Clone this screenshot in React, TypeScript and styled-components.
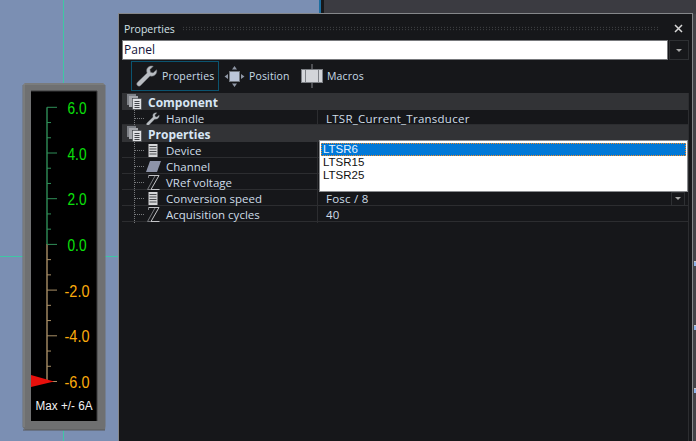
import React from "react";
import styled, { createGlobalStyle } from "styled-components";

const Global = createGlobalStyle`
  html, body { margin: 0; padding: 0; background: #7b8fb3; overflow: hidden; }
`;

const Desktop = styled.div`
  position: relative;
  width: 696px;
  height: 441px;
  overflow: hidden;
  background: #7b8fb3;
  font-family: "Open Sans", "Noto Sans", sans-serif;
`;

const BackPanel = styled.div`
  position: absolute;
  left: 319px;
  top: 0;
  right: 0;
  height: 14px;
  box-sizing: border-box;
  background: #3b3b41;
  border-left: 2px solid #1c6ea0;
  box-shadow: inset 3px 0 0 #17181a;
`;

const GuideH = styled.div`
  position: absolute;
  left: 0;
  top: 256px;
  width: 119px;
  height: 1px;
  background: #3fc7a4;
`;

const GuideV = styled.div`
  position: absolute;
  left: 63px;
  top: 0;
  width: 1px;
  height: 441px;
  background: #3fc7a4;
`;

const MeterSvg = styled.svg`
  position: absolute;
  left: 20px;
  top: 80px;
`;

const SideStrip = styled.div`
  position: absolute;
  left: 692px;
  top: 14px;
  bottom: 0;
  width: 4px;
  background: #434348;
`;

const Notch = styled.div<{ $top: number }>`
  position: absolute;
  left: 694px;
  top: ${(p) => p.$top}px;
  width: 2px;
  height: 4px;
  background: #8fb4e8;
  border-top: 1px solid #c9c9c9;
`;

const Window = styled.div`
  position: absolute;
  left: 118px;
  top: 13px;
  width: 575px;
  height: 428px;
  box-sizing: border-box;
  border: 1px solid #85878a;
  border-bottom: 0;
  background: #16171a;
  display: flex;
  flex-direction: column;
  padding: 0 3px;
`;

const TitleBar = styled.div`
  height: 26px;
  display: flex;
  align-items: center;
  gap: 7px;
  padding: 3px 0 0 2px;
  box-sizing: border-box;
  color: #d3e0e6;
  font-size: 10.5px;
`;

const Dots = styled.div`
  flex: 1;
  height: 5px;
  background-image: radial-gradient(#4a4c4f 0.8px, transparent 0.9px);
  background-size: 3px 2.5px;
`;

const CloseBtn = styled.svg`
  width: 9px;
  height: 9px;
  margin: 0 6px 0 8px;
  flex: none;
`;

const PanelRow = styled.div`
  display: flex;
  height: 20px;
  gap: 1px;
`;

const PanelInput = styled.div`
  flex: 1;
  box-sizing: border-box;
  background: #fff;
  border: 1px solid #77797c;
  color: #12123a;
  font-size: 12px;
  line-height: 17px;
  padding-left: 1px;
`;

const DropBtn = styled.div<{ $w: number; $h: number }>`
  width: ${(p) => p.$w}px;
  height: ${(p) => p.$h}px;
  box-sizing: border-box;
  border: 1px solid #2e3033;
  background: #17181b;
  display: flex;
  align-items: center;
  justify-content: center;
  flex: none;
  &::after {
    content: "";
    border-left: 3px solid transparent;
    border-right: 3px solid transparent;
    border-top: 3px solid #a8a8a8;
  }
`;

const Toolbar = styled.div`
  display: flex;
  align-items: stretch;
  height: 30px;
  margin: 1px 0 2px 9px;
`;

const ToolButton = styled.div<{ $active?: boolean; $w: number }>`
  width: ${(p) => p.$w}px;
  box-sizing: border-box;
  display: flex;
  align-items: center;
  gap: 4px;
  padding-left: 4px;
  border: 1px solid ${(p) => (p.$active ? "#0b5470" : "transparent")};
  color: #c8dbe6;
  font-size: 10.5px;
  letter-spacing: 0.15px;
`;

const Grid = styled.div`
  flex: 1;
  width: 567px;
  box-sizing: border-box;
  border-right: 1px solid #2c2d30;
  display: flex;
  flex-direction: column;
`;

const SectionRow = styled.div`
  height: 17px;
  flex: none;
  background: #323336;
  display: flex;
  align-items: center;
  padding-left: 5px;
  gap: 6px;
  color: #d8e6f4;
  font-size: 12px;
  font-weight: 700;
`;

const SectionLabel = styled.span`
  margin-top: 2px;
`;

const PropRow = styled.div<{ $h?: number }>`
  height: ${(p) => p.$h ?? 16}px;
  flex: none;
  box-sizing: border-box;
  border-bottom: 1px solid #2c2d30;
  display: grid;
  grid-template-columns: 196px 1fr;
  color: #cfdde8;
  font-size: 11.5px;
`;

const NameCell = styled.div`
  display: flex;
  align-items: center;
  padding-left: 12px;
  border-right: 1px solid #2c2d30;
  min-width: 0;
  line-height: 17px;
`;

const Branch = styled.div`
  width: 10px;
  height: 100%;
  box-sizing: border-box;
  border-left: 1px dotted #77797c;
  flex: none;
  display: flex;
  align-items: center;
  &::after {
    content: "";
    width: 100%;
    border-top: 1px dotted #77797c;
  }
`;

const IconSlot = styled.div`
  width: 22px;
  height: 15px;
  box-sizing: border-box;
  padding-right: 4px;
  display: flex;
  align-items: center;
  justify-content: center;
  flex: none;
`;

const ValueCell = styled.div`
  display: flex;
  align-items: center;
  justify-content: space-between;
  padding: 0 3px 0 8px;
  letter-spacing: 0.25px;
  line-height: 17px;
`;

const ListBox = styled.div`
  position: absolute;
  left: 200px;
  top: 126px;
  width: 369px;
  height: 52px;
  box-sizing: border-box;
  border: 1px solid #8a8c8f;
  box-shadow: inset 0 0 0 1px #fff;
  background: #fff;
  padding: 2px 1px;
  font-family: "Liberation Sans", Arial, sans-serif;
  font-size: 11.5px;
`;

const ListItem = styled.div<{ $selected?: boolean }>`
  height: 13px;
  box-sizing: border-box;
  color: ${(p) => (p.$selected ? "#e6f2ff" : "#111")};
  background: ${(p) => (p.$selected ? "#0078d7" : "transparent")};
  border: ${(p) => (p.$selected ? "1px dotted #f08a24" : "0")};
  line-height: ${(p) => (p.$selected ? "11px" : "12px")};
  padding-left: ${(p) => (p.$selected ? "1px" : "2px")};
`;

const ticks = Array.from({ length: 19 }, (_, i) => i);
const labels = ["6.0", "4.0", "2.0", "0.0", "-2.0", "-4.0", "-6.0"];

function Meter() {
  const top = 27.3;
  const step = 45.7 / 3;
  return (
    <MeterSvg width={90} height={354} viewBox="0 0 90 354">
      <path d="M5 3 H83 L85.5 5.5 V346 L85 350 H5 L2.5 347 V5.5 Z" fill="#6f7071" />
      <path d="M4 4 H84 M4 4 V347" stroke="#868788" strokeWidth={1} fill="none" />
      <path d="M3 350 H85" stroke="#565758" strokeWidth={1} />
      <rect x={11} y={11} width={66} height={330} fill="#000" />
      <path d="M11 11 H77 V341" stroke="#3c3d3e" fill="none" />
      <line x1={27} x2={27} y1={top} y2={164} stroke="#2f8f58" strokeWidth={1.4} />
      <line x1={27} x2={27} y1={164} y2={top + step * 18} stroke="#a98f66" strokeWidth={1.4} />
      {ticks.map((i) => {
        const y = top + step * i;
        const major = i % 3 === 0;
        return (
          <line
            key={i}
            x1={27}
            x2={major ? 37 : 31}
            y1={y}
            y2={y}
            stroke={i > 9 ? "#a98f66" : "#2f8f58"}
            strokeWidth={1}
          />
        );
      })}
      {labels.map((t, i) => {
        const neg = t.startsWith("-");
        return (
          <text
            key={t}
            x={57}
            y={top + step * 3 * i + 6.5}
            textAnchor="middle"
            fontFamily='"Liberation Sans", Arial, sans-serif'
            fontSize={17}
            textLength={neg ? 25 : 19}
            lengthAdjust="spacingAndGlyphs"
            fill={neg ? "#fbab0c" : "#0be00b"}
          >
            {t}
          </text>
        );
      })}
      <path d="M11 295 L34 301.5 L11 307 Z" fill="#e8100c" />
      <text
        x={44}
        y={330}
        textAnchor="middle"
        fontFamily='"Liberation Sans", Arial, sans-serif'
        fontSize={12.5}
        textLength={57}
        lengthAdjust="spacingAndGlyphs"
        fill="#f2f2f2"
      >
        Max +/- 6A
      </text>
    </MeterSvg>
  );
}

function StackIcon() {
  return (
    <svg width="15" height="16" viewBox="0 0 15 16">
      <rect x="0" y="0" width="9" height="11" fill="#7d8086" />
      <rect x="2" y="2" width="9" height="11" fill="#a3a5aa" />
      <rect x="5.5" y="4.5" width="9" height="11" fill="#dfe0e3" stroke="#3a3c40" strokeWidth="0.6" />
      <path d="M7.5 7.5H12.5M7.5 9.5H12.5M7.5 11.5H12.5M7.5 13.5H12.5" stroke="#44464b" />
    </svg>
  );
}

function WrenchIcon({ size }: { size: number }) {
  return (
    <svg width={size} height={size} viewBox="0 0 24 24">
      <path
        d="M22.5 5.2 L18.6 8.6 L15.8 7.8 L15.2 5 L18.8 1.4 C15.5 0.2 11.6 2.4 11.6 6.2 C11.6 7.2 11.8 8 12.1 8.7 L1.6 18.8 C0.4 20 0.7 21.6 1.6 22.4 C2.6 23.3 4 23.4 5.1 22.3 L15.3 11.9 C19.4 13.4 23.6 9.6 22.5 5.2 Z"
        fill="#b9bdc2"
        stroke="#6c7075"
        strokeWidth="0.6"
      />
    </svg>
  );
}

function MoveIcon() {
  return (
    <svg width="21" height="21" viewBox="0 0 21 21">
      <rect x="5.5" y="5.5" width="10" height="10" fill="#bcc6d8" stroke="#70757c" />
      <path
        d="M10.5 0 L13 3.5 H8 Z M10.5 21 L13 17.5 H8 Z M0.5 10.5 L4 8 V13 Z M20.5 10.5 L17 8 V13 Z"
        fill="#8f97a5"
      />
    </svg>
  );
}

function MacroIcon() {
  return (
    <svg width="22" height="24" viewBox="0 0 22 24">
      <path d="M11 0V24" stroke="#85888c" />
      <rect x="0.5" y="5.5" width="21" height="13" fill="#d3d5d9" stroke="#7d8085" />
      <path d="M4.5 5.5V18.5M17.5 5.5V18.5" stroke="#7d8085" />
    </svg>
  );
}

function PageIcon() {
  return (
    <svg width="10" height="13" viewBox="0 0 10 13">
      <rect x="0.5" y="0" width="9" height="13" fill="#d5d6d8" />
      <path d="M1.5 2.5H8.5M1.5 5H8.5M1.5 7.5H8.5M1.5 10H8.5" stroke="#4a4c50" />
    </svg>
  );
}

function ChannelIcon() {
  return (
    <svg width="15" height="11" viewBox="0 0 15 11">
      <path d="M4 0 H15 L11 11 H0 Z" fill="#8d93a8" />
    </svg>
  );
}

function ZetaIcon() {
  return (
    <svg width="13" height="15" viewBox="0 0 13 15" fill="none">
      <path d="M1.5 0.5 H12 L4 14.5 H12.5" stroke="#c4c5c8" strokeWidth="1" />
      <path d="M8 1 L0.5 14.5 H4 M1.5 0.5 V3" stroke="#77797d" strokeWidth="1" />
    </svg>
  );
}

function Row({ icon, name, value, dropdown, h }: { icon: React.ReactNode; name: string; value?: string; dropdown?: boolean; h?: number }) {
  return (
    <PropRow $h={h}>
      <NameCell>
        <Branch />
        <IconSlot>{icon}</IconSlot>
        {name}
      </NameCell>
      <ValueCell>
        {value}
        {dropdown && <DropBtn $w={14} $h={14} />}
      </ValueCell>
    </PropRow>
  );
}

export default function App() {
  return (
    <Desktop>
      <Global />
      <GuideH />
      <GuideV />
      <BackPanel />
      <Meter />
      <SideStrip />
      <Notch $top={261} />
      <Notch $top={325} />
      <Notch $top={388} />
      <Window>
        <TitleBar>
          Properties
          <Dots />
          <CloseBtn viewBox="0 0 9 9">
            <path d="M1 1L8 8M8 1L1 8" stroke="#d8d8d8" strokeWidth="1.5" />
          </CloseBtn>
        </TitleBar>
        <PanelRow>
          <PanelInput>Panel</PanelInput>
          <DropBtn $w={20} $h={20} />
        </PanelRow>
        <Toolbar>
          <ToolButton $active $w={88}>
            <WrenchIcon size={22} />
            Properties
          </ToolButton>
          <ToolButton $w={77}>
            <MoveIcon />
            Position
          </ToolButton>
          <ToolButton $w={80}>
            <MacroIcon />
            Macros
          </ToolButton>
        </Toolbar>
        <Grid>
          <SectionRow>
            <StackIcon />
            <SectionLabel>Component</SectionLabel>
          </SectionRow>
          <Row icon={<WrenchIcon size={14} />} name="Handle" value="LTSR_Current_Transducer" h={15} />
          <SectionRow>
            <StackIcon />
            <SectionLabel>Properties</SectionLabel>
          </SectionRow>
          <Row icon={<PageIcon />} name="Device" />
          <Row icon={<ChannelIcon />} name="Channel" />
          <Row icon={<ZetaIcon />} name="VRef voltage" />
          <Row icon={<PageIcon />} name="Conversion speed" value="Fosc / 8" dropdown />
          <Row icon={<ZetaIcon />} name="Acquisition cycles" value="40" />
        </Grid>
        <ListBox>
          <ListItem $selected>LTSR6</ListItem>
          <ListItem>LTSR15</ListItem>
          <ListItem>LTSR25</ListItem>
        </ListBox>
      </Window>
    </Desktop>
  );
}
